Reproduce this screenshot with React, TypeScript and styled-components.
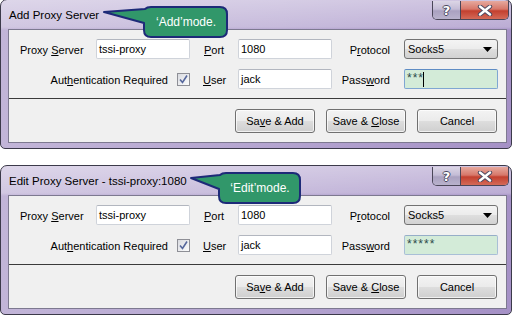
import styled, { createGlobalStyle } from "styled-components";

const GlobalStyle = createGlobalStyle`
  html, body {
    margin: 0;
    padding: 0;
    background: #ffffff;
  }
  body {
    font-family: "Liberation Sans", Arial, sans-serif;
    font-size: 11px;
    color: #000;
  }
`;

const Page = styled.div`
  display: flex;
  flex-direction: column;
  gap: 16px;
  width: 515px;
  margin-top: -1px;
`;

const Frame = styled.div`
  position: relative;
  box-sizing: border-box;
  width: 512px;
  height: 150px;
  display: flex;
  flex-direction: column;
  border: 1px solid #3c3a4a;
  border-radius: 7px 7px 5px 5px;
  padding: 0 4px 5px 7px;
  background: linear-gradient(
      180deg,
      rgba(255, 255, 255, 0.45) 0px,
      rgba(255, 255, 255, 0.25) 27px,
      rgba(255, 255, 255, 0) 30px
    ),
    linear-gradient(90deg, #c2b5d8 0%, #b4a4d0 55%, #a591c6 100%);
`;

const TitleBar = styled.div`
  height: 29px;
  display: flex;
  align-items: flex-start;
`;

const Title = styled.span`
  padding: 8px 0 0 1px;
  font-size: 11.5px;
  line-height: 14px;
  color: #000;
  white-space: nowrap;
`;

const CaptionButtons = styled.div`
  margin: 1px -2px 0 auto;
  display: flex;
  height: 18px;
  border: 1px solid #4a4658;
  border-top: none;
  border-radius: 0 0 5px 5px;
  overflow: hidden;
`;

const CaptionButton = styled.div<{ $close?: boolean }>`
  width: ${(p) => (p.$close ? 47 : 27)}px;
  display: flex;
  align-items: center;
  justify-content: center;
  color: #fff;
  font-weight: bold;
  font-size: 13px;
  font-family: "DejaVu Sans", "Liberation Sans", sans-serif;
  text-shadow: 1px 0 0 #4b4860, -1px 0 0 #4b4860, 0 1px 0 #4b4860, 0 -1px 0 #4b4860;
  background: ${(p) =>
    p.$close
      ? "linear-gradient(180deg, #e6a99e 0%, #d7776a 45%, #c3402f 55%, #d46a58 100%)"
      : "linear-gradient(180deg, #dcd6e6 0%, #c4bcd6 45%, #aaa1c0 55%, #b9b2cc 100%)"};
  & + & {
    border-left: 1px solid #4a4658;
  }
`;

const Client = styled.div`
  box-sizing: border-box;
  height: 114px;
  display: flex;
  flex-direction: column;
  border: 1px solid #7d7990;
  background: #f0f0f0;
`;

const Form = styled.div`
  display: grid;
  grid-template-columns: 76px 94px 48px 94px 72px 94px;
  grid-auto-rows: 20px;
  row-gap: 10px;
  align-items: center;
  padding: 9px 8px 9px 11px;
  border-bottom: 1px solid #3b3b3b;
`;

const Label = styled.span<{ $align?: "left" | "right"; $inset?: number }>`
  white-space: nowrap;
  padding-top: 2px;
  text-align: ${(p) => p.$align ?? "left"};
  padding-left: ${(p) => (p.$align === "right" ? 0 : p.$inset ?? 0)}px;
  padding-right: ${(p) => (p.$align === "right" ? p.$inset ?? 0 : 0)}px;
`;

const CheckCell = styled.div`
  grid-column: 1 / span 2;
  display: flex;
  justify-content: flex-end;
  align-items: center;
  gap: 9px;
`;

const Field = styled.div<{ $password?: boolean; $focused?: boolean }>`
  box-sizing: border-box;
  height: 20px;
  display: flex;
  align-items: ${(p) => (p.$password ? "flex-start" : "center")};
  padding-left: 2px;
  border: 1px solid ${(p) => (p.$focused ? "#7fa6d2" : p.$password ? "#a9bfd6" : "#cfd3da")};
  border-top-color: ${(p) => (p.$focused ? "#5f8cc4" : p.$password ? "#96aec8" : "#b2b6bf")};
  border-radius: 2px;
  background: ${(p) => (p.$password ? "#d3ebd8" : "#ffffff")};
  color: ${(p) => (p.$password ? "#2c4a4a" : "#000")};
  font-size: ${(p) => (p.$password ? "12px" : "11px")};
  line-height: ${(p) => (p.$password ? "14px" : "normal")};
  letter-spacing: ${(p) => (p.$password ? "1px" : "0")};
  padding-top: ${(p) => (p.$password ? "1px" : "0")};
`;

const Caret = styled.span`
  display: inline-block;
  width: 1px;
  height: 15px;
  margin-left: -1px;
  margin-top: 1px;
  background: #000;
`;

const Select = styled.div`
  box-sizing: border-box;
  height: 20px;
  display: flex;
  align-items: center;
  justify-content: space-between;
  padding: 0 5px 0 3px;
  border: 1px solid #727272;
  border-radius: 3px;
  background: linear-gradient(180deg, #f4f4f4 0%, #ececec 48%, #dedede 52%, #d2d2d2 100%);
  font-size: 11px;
`;

const Checkbox = styled.div`
  box-sizing: border-box;
  width: 13px;
  height: 13px;
  border: 1px solid #8e8f96;
  background: linear-gradient(135deg, #d9dbe0 0%, #f1f2f4 70%, #fbfbfb 100%);
  display: flex;
  align-items: center;
  justify-content: center;
`;

const ButtonBar = styled.div`
  display: flex;
  justify-content: flex-end;
  gap: 11px;
  padding: 10px 9px 9px 0;
`;

const Button = styled.div`
  box-sizing: border-box;
  width: 80px;
  height: 24px;
  display: flex;
  align-items: center;
  justify-content: center;
  border: 1px solid #707070;
  border-radius: 3px;
  background: linear-gradient(180deg, #f3f3f3 0%, #ebebeb 48%, #dddddd 52%, #cfcfcf 100%);
  box-shadow: inset 0 0 0 1px rgba(255, 255, 255, 0.7);
  font-size: 11px;
  white-space: pre;
`;

const CalloutWrap = styled.div<{ $left: number; $width: number }>`
  position: absolute;
  top: 6px;
  left: ${(p) => p.$left}px;
  width: ${(p) => p.$width}px;
  height: 32px;
`;

const CalloutText = styled.span<{ $tail: number }>`
  position: absolute;
  top: 0;
  bottom: 0;
  left: ${(p) => p.$tail}px;
  right: 0;
  display: flex;
  align-items: center;
  justify-content: center;
  color: #fff;
  font-size: 12px;
  white-space: nowrap;
`;

type CalloutProps = { text: string; left: number; tail: number; box: number };

const Callout = ({ text, left, tail, box }: CalloutProps) => {
  const w = tail + box;
  const h = 32;
  const r = 7;
  const d = `M ${tail + r} 1 H ${w - 1 - r} Q ${w - 1} 1 ${w - 1} ${1 + r} V ${h - 1 - r} Q ${w - 1} ${h - 1} ${w - 1 - r} ${h - 1} H ${tail + r} Q ${tail} ${h - 1} ${tail} ${h - 1 - r} V 17 L 1 6 L ${tail + 1} 3 Q ${tail + 3} 1 ${tail + r} 1 Z`;
  return (
    <CalloutWrap $left={left} $width={w}>
      <svg width={w} height={h} style={{ position: "absolute", left: 0, top: 0 }}>
        <path d={d} fill="#31976a" stroke="#1d2a78" strokeWidth={2} strokeLinejoin="round" />
      </svg>
      <CalloutText $tail={tail}>{text}</CalloutText>
    </CalloutWrap>
  );
};

const CloseGlyph = () => (
  <svg width="16" height="11" viewBox="0 0 16 11">
    <path d="M3 1.5 L13 9.5 M13 1.5 L3 9.5" stroke="#4b4860" strokeWidth={4.4} strokeLinecap="round" />
    <path d="M3 1.5 L13 9.5 M13 1.5 L3 9.5" stroke="#ffffff" strokeWidth={2.4} strokeLinecap="round" />
  </svg>
);

const Arrow = () => (
  <svg width="9" height="5" viewBox="0 0 9 5">
    <path d="M0 0 H9 L4.5 5 Z" fill="#000" />
  </svg>
);

const Check = () => (
  <svg width="11" height="11" viewBox="0 0 11 11">
    <path d="M2 5.5 L4.5 8.5 L9 1.5" fill="none" stroke="#56679c" strokeWidth={1.6} />
  </svg>
);

type WindowProps = {
  title: string;
  callout: CalloutProps;
  password: string;
  focused?: boolean;
};

const ProxyWindow = ({ title, callout, password, focused }: WindowProps) => (
  <Frame>
    <TitleBar>
      <Title>{title}</Title>
      <CaptionButtons>
        <CaptionButton>?</CaptionButton>
        <CaptionButton $close>
          <CloseGlyph />
        </CaptionButton>
      </CaptionButtons>
    </TitleBar>
    <Callout {...callout} />
    <Client>
      <Form>
        <Label>
          Proxy <u>S</u>erver
        </Label>
        <Field>tssi-proxy</Field>
        <Label $inset={14}>
          <u>P</u>ort
        </Label>
        <Field>1080</Field>
        <Label $align="right" $inset={14}>
          P<u>r</u>otocol
        </Label>
        <Select>
          Socks5
          <Arrow />
        </Select>

        <CheckCell>
          <Label>
            Aut<u>h</u>entication Required
          </Label>
          <Checkbox>
            <Check />
          </Checkbox>
        </CheckCell>
        <Label $inset={13}>
          <u>U</u>ser
        </Label>
        <Field>jack</Field>
        <Label $align="right" $inset={14}>
          Pass<u>w</u>ord
        </Label>
        <Field $password $focused={focused}>
          {password}
          {focused && <Caret />}
        </Field>
      </Form>
      <ButtonBar>
        <Button>
          {"Sa"}
          <u>v</u>
          {"e & Add"}
        </Button>
        <Button>
          {"Save & "}
          <u>C</u>
          {"lose"}
        </Button>
        <Button>Cancel</Button>
      </ButtonBar>
    </Client>
  </Frame>
);

const App = () => (
  <>
    <GlobalStyle />
    <Page>
      <ProxyWindow
        title="Add Proxy Server"
        callout={{ text: "\u2018Add\u2019mode.", left: 102, tail: 41, box: 84 }}
        password="***"
        focused
      />
      <ProxyWindow
        title="Edit Proxy Server - tssi-proxy:1080"
        callout={{ text: "\u2018Edit\u2019mode.", left: 189, tail: 29, box: 82 }}
        password="*****"
      />
    </Page>
  </>
);

export default App;
